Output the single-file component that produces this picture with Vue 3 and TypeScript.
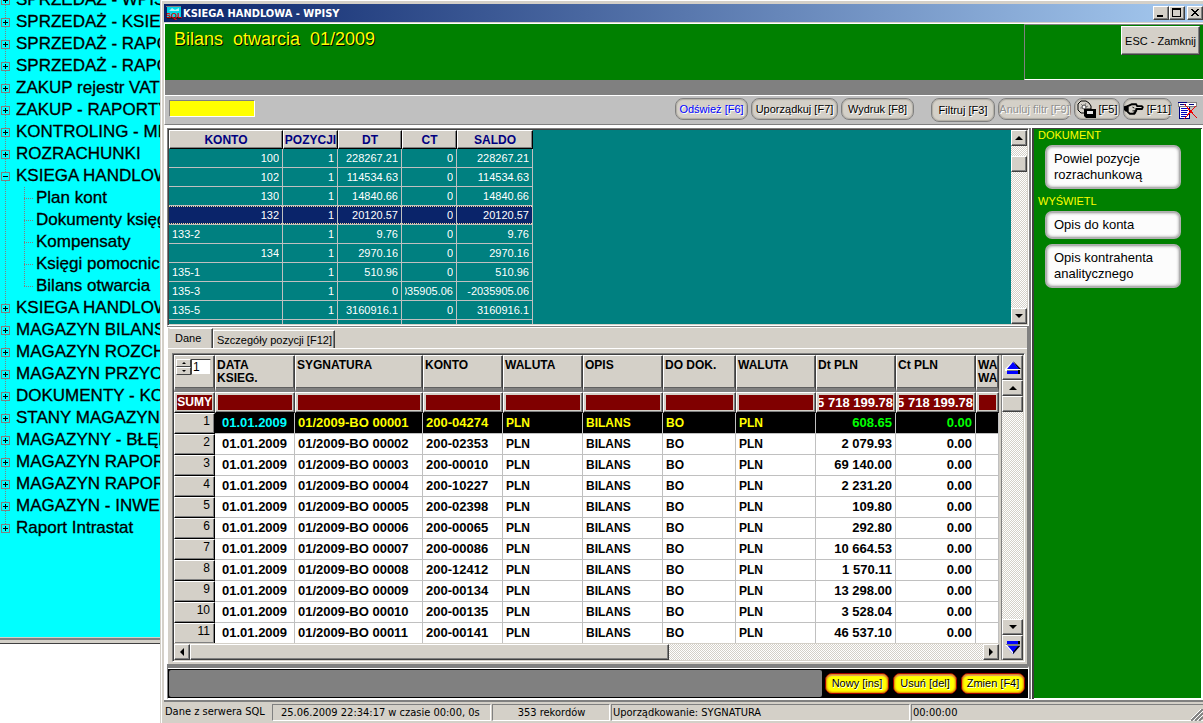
<script setup lang="ts">
import { ref } from 'vue'

interface TreeNode {
  label: string
  open?: boolean
  children?: string[]
}

interface BalanceRow {
  konto: string
  left?: boolean
  pozycji: string
  dt: string
  ct: string
  saldo: string
}

interface EntryRow {
  sygnatura: string
  konto: string
  dt: string
  ct: string
}

const tree: TreeNode[] = [
  { label: 'SPRZEDAŻ - WPISY' },
  { label: 'SPRZEDAŻ - KSIEGOWANIE' },
  { label: 'SPRZEDAŻ - RAPORTY' },
  { label: 'SPRZEDAŻ - RAPORTY' },
  { label: 'ZAKUP rejestr VAT' },
  { label: 'ZAKUP - RAPORTY' },
  { label: 'KONTROLING - MPK' },
  { label: 'ROZRACHUNKI' },
  {
    label: 'KSIEGA HANDLOWA',
    open: true,
    children: ['Plan kont', 'Dokumenty księgowe', 'Kompensaty', 'Księgi pomocnicze', 'Bilans otwarcia'],
  },
  { label: 'KSIEGA HANDLOWA' },
  { label: 'MAGAZYN BILANS' },
  { label: 'MAGAZYN ROZCHODY' },
  { label: 'MAGAZYN PRZYCHODY' },
  { label: 'DOKUMENTY - KOREKTY' },
  { label: 'STANY MAGAZYNOWE' },
  { label: 'MAGAZYNY - BŁĘDY' },
  { label: 'MAGAZYN RAPORTY' },
  { label: 'MAGAZYN RAPORTY' },
  { label: 'MAGAZYN - INWENTURA' },
  { label: 'Raport Intrastat' },
]

const balances: BalanceRow[] = [
  { konto: '100', pozycji: '1', dt: '228267.21', ct: '0', saldo: '228267.21' },
  { konto: '102', pozycji: '1', dt: '114534.63', ct: '0', saldo: '114534.63' },
  { konto: '130', pozycji: '1', dt: '14840.66', ct: '0', saldo: '14840.66' },
  { konto: '132', pozycji: '1', dt: '20120.57', ct: '0', saldo: '20120.57' },
  { konto: '133-2', left: true, pozycji: '1', dt: '9.76', ct: '0', saldo: '9.76' },
  { konto: '134', pozycji: '1', dt: '2970.16', ct: '0', saldo: '2970.16' },
  { konto: '135-1', left: true, pozycji: '1', dt: '510.96', ct: '0', saldo: '510.96' },
  { konto: '135-3', left: true, pozycji: '1', dt: '0', ct: '2035905.06', saldo: '-2035905.06' },
  { konto: '135-5', left: true, pozycji: '1', dt: '3160916.1', ct: '0', saldo: '3160916.1' },
  { konto: '', pozycji: '', dt: '', ct: '', saldo: '' },
]

const entries: EntryRow[] = [
  { sygnatura: '01/2009-BO 00001', konto: '200-04274', dt: '608.65', ct: '0.00' },
  { sygnatura: '01/2009-BO 00002', konto: '200-02353', dt: '2 079.93', ct: '0.00' },
  { sygnatura: '01/2009-BO 00003', konto: '200-00010', dt: '69 140.00', ct: '0.00' },
  { sygnatura: '01/2009-BO 00004', konto: '200-10227', dt: '2 231.20', ct: '0.00' },
  { sygnatura: '01/2009-BO 00005', konto: '200-02398', dt: '109.80', ct: '0.00' },
  { sygnatura: '01/2009-BO 00006', konto: '200-00065', dt: '292.80', ct: '0.00' },
  { sygnatura: '01/2009-BO 00007', konto: '200-00086', dt: '10 664.53', ct: '0.00' },
  { sygnatura: '01/2009-BO 00008', konto: '200-12412', dt: '1 570.11', ct: '0.00' },
  { sygnatura: '01/2009-BO 00009', konto: '200-00134', dt: '13 298.00', ct: '0.00' },
  { sygnatura: '01/2009-BO 00010', konto: '200-00135', dt: '3 528.04', ct: '0.00' },
  { sygnatura: '01/2009-BO 00011', konto: '200-00141', dt: '46 537.10', ct: '0.00' },
]

const headings = ['SYGNATURA', 'KONTO', 'WALUTA', 'OPIS', 'DO DOK.', 'WALUTA', 'Dt PLN', 'Ct PLN']
const sums = ['', '', '', '', '', '', '', '15 718 199.78', '15 718 199.78', '']
const bannerTitle = 'Bilans  otwarcia  01/2009'

const search = ref('')
const position = ref('1')
const selectedBalance = ref(3)
const selectedEntry = ref(0)
</script>

<template>
  <div class="desktop">
    <aside class="side">
      <nav class="tree" aria-label="Menu">
        <ul>
          <li v-for="(node, i) in tree" :key="i">
            <a href="#" class="node">
              <span class="box" :class="{ open: node.open }"></span>
              <span class="label">{{ node.label }}</span>
            </a>
            <ul v-if="node.children" class="branch">
              <li v-for="child in node.children" :key="child">
                <a href="#" class="leaf">{{ child }}</a>
              </li>
            </ul>
          </li>
        </ul>
      </nav>
      <div class="side-rest"></div>
    </aside>

    <main class="window">
      <header class="titlebar">
        <svg class="app-icon" width="16" height="16" viewBox="0 0 16 16" aria-hidden="true">
          <rect x="1" y="1" width="14" height="12" fill="#00d8e8" />
          <path d="M0 1h15v1H0z" fill="#808080" />
          <path d="M1 12h14v2H1z" fill="#102030" />
          <path d="M3 6l3-3 3 2 4-2v3H3z" fill="#b0f4f8" />
          <text x="8" y="13" text-anchor="middle" class="app-icon-text">SQL</text>
        </svg>
        <h1>KSIEGA HANDLOWA - WPISY</h1>
        <div class="sys">
          <button type="button" aria-label="Minimalizuj">
            <svg width="10" height="10" viewBox="0 0 10 10"><path d="M1 7h6v2H1z" /></svg>
          </button>
          <button type="button" aria-label="Maksymalizuj">
            <svg width="10" height="10" viewBox="0 0 10 10"><path d="M0 0h9v9H0zM1 2v6h7V2z" fill-rule="evenodd" /></svg>
          </button>
          <button type="button" class="close" aria-label="Zamknij">
            <svg width="10" height="10" viewBox="0 0 10 10">
              <path d="M1 1h2v1h1v1h2V2h1V1h2v1H8v1H7v1H6v1h1v1h1v1h1v1H7V7H6V6H4v1H3v1H1V7h1V6h1V5h1V4H3V3H2V2H1z" />
            </svg>
          </button>
        </div>
      </header>

      <section class="banner">
        <h2>{{ bannerTitle }}</h2>
        <div class="banner-side">
          <button type="button" class="esc">ESC - Zamknij</button>
        </div>
      </section>
      <div class="strip"></div>

      <div class="toolbar">
        <input v-model="search" class="search" type="text" aria-label="Szukaj" />
        <div class="tools">
          <button type="button" class="pill w72 blue">Odśwież [F6]</button>
          <button type="button" class="pill w87">Uporządkuj [F7]</button>
          <button type="button" class="pill w72">Wydruk [F8]</button>
          <button type="button" class="pill w64 gap tall">Filtruj [F3]</button>
          <button type="button" class="pill w72 off" disabled>Anuluj filtr [F9]</button>
          <button type="button" class="pill w46">
            <svg width="19" height="18" viewBox="0 0 19 18" aria-hidden="true">
              <path d="M4 1h5l3 2 2 3v3H8v4H4L1 10V4z" fill="#d4d0c8" stroke="#000" />
              <path d="M4 4l2 2M9 3l-1 2M3 8h2M11 6l-2 1" stroke="#808080" />
              <circle cx="7" cy="7" r="2" fill="#fff" stroke="#404040" />
              <path d="M7 9h12v9H9l-2-2z" fill="#000" />
              <path d="M10 11h6v3h-6z" fill="#e8e8e8" />
            </svg>
            [F5]
          </button>
          <button type="button" class="pill w48">
            <svg width="21" height="14" viewBox="0 0 21 14" aria-hidden="true">
              <path d="M0 4l4-1v7H2L0 8z" fill="#000" />
              <path d="M4 4l4-2h5l1 2h5l1 1-1 2h-6v2h-1v2h-1v1H6l-2-2z" fill="#d4d0c8" stroke="#000" stroke-width="2" stroke-linejoin="round" />
              <path d="M9 5l2 1M9 9h3" stroke="#000" />
            </svg>
            [F11]
          </button>
          <button type="button" class="plain" aria-label="Usuń tabelę">
            <svg width="20" height="18" viewBox="0 0 20 18" shape-rendering="crispEdges" aria-hidden="true">
              <path d="M0 0h19v5H0z" fill="#808080" />
              <path d="M1 1h17v3H1z" fill="#fff" />
              <path d="M0 0h9v1H0zM2 2h6v1H2zM11 2h5v1h-5z" fill="#000080" />
              <path d="M1 5h11v12H1z" fill="#000080" />
              <path d="M2 5h9v11H2z" fill="#fff" />
              <path d="M3 6h6v1H3zM3 8h7v1H3zM3 10h6v1H3zM3 12h7v1H3zM3 14h5v1H3z" fill="#0000c0" />
              <path d="M6 2l13 14M18 4L6 17" stroke="#f00000" fill="none" />
            </svg>
          </button>
        </div>
      </div>

      <div class="body">
        <div class="left">
          <section class="balances sunken">
            <div class="balances-view">
              <table>
                <colgroup>
                  <col class="c114" /><col class="c55" /><col class="c64" /><col class="c55" /><col class="c76" />
                </colgroup>
                <thead>
                  <tr>
                    <th>KONTO</th><th>POZYCJI</th><th>DT</th><th>CT</th><th>SALDO</th>
                  </tr>
                </thead>
                <tbody>
                  <tr v-for="(row, i) in balances" :key="i" :class="{ selected: i === selectedBalance }" @click="selectedBalance = i">
                    <td :class="{ start: row.left }"><span>{{ row.konto }}</span></td>
                    <td><span>{{ row.pozycji }}</span></td>
                    <td><span>{{ row.dt }}</span></td>
                    <td><span>{{ row.ct }}</span></td>
                    <td><span>{{ row.saldo }}</span></td>
                  </tr>
                </tbody>
              </table>
            </div>
            <div class="vscroll">
              <button type="button" class="sb" aria-label="W górę"><i class="arrow up"></i></button>
              <div class="thumb first"></div>
              <div class="fill"></div>
              <button type="button" class="sb" aria-label="W dół"><i class="arrow down"></i></button>
            </div>
          </section>

          <section class="details">
            <div class="tabs" role="tablist">
              <button type="button" role="tab" aria-selected="true" class="tab active">Dane</button>
              <button type="button" role="tab" aria-selected="false" class="tab">Szczegóły pozycji [F12]</button>
            </div>
            <div class="pane">
              <div class="grid sunken">
                <div class="grid-main">
                  <div class="grid-view">
                    <table>
                      <colgroup>
                        <col class="c41" /><col class="c80" /><col class="c128" /><col class="c80" /><col class="c80" />
                        <col class="c80" /><col class="c73" /><col class="c80" /><col class="c80" /><col class="c80" /><col />
                      </colgroup>
                      <thead>
                        <tr class="heads">
                          <th>
                            <div class="counter">
                              <span class="spin">
                                <button type="button" aria-label="Następny"><i class="arrow up small"></i></button>
                                <button type="button" aria-label="Poprzedni"><i class="arrow down small"></i></button>
                              </span>
                              <input v-model="position" type="text" aria-label="Pozycja" />
                            </div>
                          </th>
                          <th>DATA<br />KSIEG.</th>
                          <th v-for="(h, i) in headings" :key="i">{{ h }}</th>
                          <th>WA<br />WA</th>
                        </tr>
                        <tr class="sums">
                          <th><span>SUMY</span></th>
                          <td v-for="(s, i) in sums" :key="i"><span>{{ s }}</span></td>
                        </tr>
                      </thead>
                      <tbody>
                        <tr v-for="(row, i) in entries" :key="i" :class="{ selected: i === selectedEntry }" @click="selectedEntry = i">
                          <th>{{ i + 1 }}</th>
                          <td class="date">01.01.2009</td>
                          <td class="code">{{ row.sygnatura }}</td>
                          <td class="code">{{ row.konto }}</td>
                          <td>PLN</td>
                          <td>BILANS</td>
                          <td>BO</td>
                          <td>PLN</td>
                          <td class="amount">{{ row.dt }}</td>
                          <td class="amount">{{ row.ct }}</td>
                          <td></td>
                        </tr>
                      </tbody>
                    </table>
                  </div>
                  <div class="hscroll">
                    <button type="button" class="sb" aria-label="W lewo"><i class="arrow west"></i></button>
                    <div class="thumb wide"></div>
                    <div class="fill"></div>
                    <button type="button" class="sb" aria-label="W prawo"><i class="arrow east"></i></button>
                  </div>
                </div>
                <div class="vscroll big">
                  <button type="button" class="sb jump" aria-label="Początek">
                    <svg width="16" height="14" viewBox="0 0 16 14"><path d="M8 0L0 8v2h2z" fill="#fff" /><path d="M8 0l8 8h-3z" fill="#000" /><path d="M8 1l6 7H2z" fill="#00f" /><path d="M1 8h14v2H1z" fill="#fff" /><path d="M2 9h13v1H2z" fill="#808080" /><path d="M2 10h13v3H2z" fill="#00f" /><path d="M13 9h2v4h-2z" fill="#000" /></svg>
                  </button>
                  <button type="button" class="sb" aria-label="W górę"><i class="arrow up"></i></button>
                  <div class="thumb"></div>
                  <div class="fill"></div>
                  <button type="button" class="sb" aria-label="W dół"><i class="arrow down"></i></button>
                  <button type="button" class="sb jump" aria-label="Koniec">
                    <svg width="16" height="14" viewBox="0 0 16 14"><path d="M2 0h12v3H2z" fill="#00f" /><path d="M13 0h2v4h-2z" fill="#000" /><path d="M1 3h14v2H1z" fill="#808080" /><path d="M1 5h14l-7 8z" fill="#00f" /><path d="M13 5h2l-7 8v-2z" fill="#000" /><path d="M0 4h2l6 7v2z" fill="#fff" /></svg>
                  </button>
                </div>
              </div>
            </div>
          </section>

          <footer class="actions">
            <div class="message"></div>
            <button type="button">Nowy [ins]</button>
            <button type="button">Usuń [del]</button>
            <button type="button">Zmien [F4]</button>
          </footer>
        </div>

        <aside class="commands">
          <h3>DOKUMENT</h3>
          <button type="button">Powiel pozycje rozrachunkową</button>
          <h3>WYŚWIETL</h3>
          <button type="button">Opis do konta</button>
          <button type="button">Opis kontrahenta analitycznego</button>
        </aside>
      </div>

      <footer class="status">
        <span class="source">Dane z serwera SQL</span>
        <span class="field time">25.06.2009 22:34:17 w czasie 00:00, 0s</span>
        <span class="field count">353 rekordów</span>
        <span class="field order">Uporządkowanie: SYGNATURA</span>
        <span class="field clock">00:00:00</span>
        <svg class="grip" width="12" height="12" viewBox="0 0 12 12" aria-hidden="true">
          <path d="M0 12L12 0M4 12l8-8M8 12l4-4" stroke="#808080" stroke-width="2" />
          <path d="M-1 11L11-1M3 11l9-9M7 11l5-5" stroke="#fff" />
        </svg>
      </footer>
    </main>
  </div>
</template>

<style>
html,
body {
  background: #fff;
  overflow: hidden;
}
</style>

<style scoped>
* {
  box-sizing: border-box;
}

.desktop {
  display: flex;
  height: 100vh;
  font-family: "Liberation Sans", Arial, sans-serif;
  font-size: 11px;
  color: #000;
}

button,
input {
  font: inherit;
  color: inherit;
  margin: 0;
  padding: 0;
  border-radius: 0;
  outline: none;
}

h1,
h2,
h3,
ul {
  margin: 0;
  padding: 0;
}

ul {
  list-style: none;
}

/* navigation tree */
.side {
  flex: none;
  width: 160px;
  display: flex;
  flex-direction: column;
}

.tree {
  flex: 1;
  min-height: 0;
  overflow: hidden;
  background: #0ff;
  border-bottom: 1px solid #d4d0c8;
}

.tree > ul {
  margin-top: -11px;
}

.tree > ul > li {
  background: repeating-linear-gradient(#808080 0 1px, transparent 1px 2px) 5px 0 / 1px 100% no-repeat;
}

.tree > ul > li:last-child {
  background-size: 1px 11px;
}

.node,
.leaf {
  display: flex;
  align-items: center;
  height: 22px;
  font-size: 17px;
  white-space: nowrap;
  color: #000;
  text-decoration: none;
  -webkit-text-stroke: 0.3px #000;
}

.node {
  padding-left: 1px;
  gap: 6px;
}

.box {
  flex: none;
  width: 9px;
  height: 9px;
  border: 1px solid #808080;
  background:
    linear-gradient(#000, #000) center / 5px 1px no-repeat,
    linear-gradient(#000, #000) center / 1px 5px no-repeat,
    #0ff;
}

.box.open {
  background: linear-gradient(#000, #000) center / 5px 1px no-repeat, #0ff;
}

.branch {
  margin-left: 24px;
}

.branch li {
  padding-left: 12px;
  background:
    repeating-linear-gradient(#808080 0 1px, transparent 1px 2px) 0 0 / 1px 100% no-repeat,
    repeating-linear-gradient(90deg, #808080 0 1px, transparent 1px 2px) 0 11px / 9px 1px no-repeat;
}

.branch li:last-child {
  background-size: 1px 12px, 9px 1px;
}

.side-rest {
  flex: none;
  height: 85px;
  background: #fff;
  border-top: 2px solid #808080;
  box-shadow: inset 0 3px #d4d0c8, inset 0 4px #404040;
}

/* window frame */
.window {
  flex: 1;
  min-width: 0;
  display: flex;
  flex-direction: column;
  padding: 2px 0 0 2px;
  background: #d4d0c8;
  border-left: 1px solid #d4d0c8;
  box-shadow: inset 1px 1px #fff;
}

.titlebar {
  display: flex;
  align-items: center;
  height: 18px;
  margin: 2px 0 1px 1px;
  padding-left: 2px;
  background: linear-gradient(90deg, #0a246a, #a6caf0);
  color: #fff;
}

.titlebar h1 {
  flex: 1;
  padding-left: 1px;
  font-family: "DejaVu Sans Condensed", "DejaVu Sans", sans-serif;
  font-size: 11px;
  font-weight: bold;
  white-space: nowrap;
}

.app-icon-text {
  font: bold 8px "Liberation Sans", Arial, sans-serif;
  fill: #e00000;
}

.sys {
  display: flex;
}

.sys button {
  width: 16px;
  height: 14px;
  display: flex;
  align-items: center;
  justify-content: center;
  background: #d4d0c8;
  border: 1px solid;
  border-color: #fff #404040 #404040 #fff;
  box-shadow: inset -1px -1px #808080;
}

.sys .close {
  margin-left: 2px;
}

.banner {
  display: flex;
  height: 57px;
  margin-left: 1px;
  background: #008000;
  border-top: 1px solid #fff;
  border-left: 1px solid #fff;
}

.banner h2 {
  flex: 1;
  padding: 4px 0 0 9px;
  font-size: 18px;
  line-height: 22px;
  font-weight: normal;
  white-space: pre;
  color: #ff0;
  text-shadow: 1px 1px #000;
}

.banner-side {
  width: 179px;
  display: flex;
  justify-content: flex-end;
  align-items: flex-start;
  padding: 1px 3px 0 0;
  border: 1px solid;
  border-color: #808080 transparent #fff #808080;
  border-right: 0;
}

.esc {
  width: 79px;
  height: 29px;
  background: #d4d0c8;
  border: 1px solid;
  border-color: #fff #404040 #404040 #fff;
  box-shadow: inset -1px -1px #808080;
  white-space: nowrap;
}

.strip {
  height: 15px;
  margin-left: 1px;
  background: #808080;
  border-left: 1px solid #fff;
}

.toolbar {
  display: flex;
  justify-content: space-between;
  height: 30px;
  margin-left: 1px;
  padding: 2px 5px 0 4px;
  background: #c0c0c0;
  border-top: 1px solid #fff;
  border-left: 1px solid #fff;
  border-bottom: 1px solid #808080;
}

.search {
  width: 86px;
  height: 17px;
  margin-top: 2px;
  background: #ff0;
  border: 1px solid;
  border-color: #808080 #fff #fff #808080;
}

.tools {
  display: flex;
  align-items: flex-start;
  gap: 3px;
}

.pill {
  height: 22px;
  display: flex;
  align-items: center;
  justify-content: center;
  gap: 3px;
  background: #d4d0c8;
  border: 1px solid #808080;
  border-radius: 8px;
  box-shadow: inset 0 0 1px 1px #b0aca4;
  text-shadow: 1px 1px #fff;
  white-space: nowrap;
}

.pill.tall {
  height: 24px;
}

.gap {
  margin-left: 14px;
}

.w46 { width: 46px; }
.w48 { width: 49px; }
.w64 { width: 64px; }
.w72 { width: 73px; }
.w87 { width: 87px; }

.blue { color: #00f; }
.off { color: #909090; }

.plain {
  margin: 4px 0 0 3px;
  background: none;
  border: 0;
  line-height: 0;
}

/* work area */
.body {
  flex: 1;
  min-height: 0;
  display: flex;
  margin-left: 1px;
  padding: 3px 0 1px 3px;
  background: #fff;
}

.left {
  flex: 1;
  min-width: 0;
  display: flex;
  flex-direction: column;
}

.sunken {
  display: flex;
  padding: 1px;
  background: #d4d0c8;
  border: 1px solid;
  border-color: #808080 #fff #fff #808080;
  box-shadow: inset 1px 1px #404040;
}

.balances {
  flex: none;
  height: 198px;
}

.balances-view {
  flex: 1;
  min-width: 0;
  overflow: hidden;
  background: #008080;
}

table {
  table-layout: fixed;
  border-collapse: separate;
  border-spacing: 0;
}

.balances table {
  width: 364px;
}

.c41 { width: 41px; }
.c55 { width: 55px; }
.c64 { width: 64px; }
.c73 { width: 73px; }
.c76 { width: 76px; }
.c80 { width: 80px; }
.c114 { width: 114px; }
.c128 { width: 128px; }

.balances th {
  height: 19px;
  padding: 0;
  overflow: hidden;
  font-size: 12px;
  line-height: 16px;
  color: #000080;
  background: #d4d0c8;
  border: 1px solid;
  border-color: #fff #000 #000 #fff;
  box-shadow: inset -1px -1px #808080;
}

.balances td {
  height: 19px;
  padding: 0 3px;
  font-size: 11px;
  line-height: 18px;
  color: #fff;
  border-right: 1px solid #c0c0c0;
  border-bottom: 1px solid #c0c0c0;
}

.balances td span {
  display: flex;
  height: 18px;
  overflow: hidden;
  justify-content: flex-end;
}

.balances td.start span {
  justify-content: flex-start;
}

.balances .selected td {
  background:
    repeating-linear-gradient(90deg, #f5db95 0 1px, transparent 1px 2px) 0 0 / 100% 1px no-repeat,
    repeating-linear-gradient(90deg, #f5db95 0 1px, transparent 1px 2px) 0 100% / 100% 1px no-repeat,
    #0a246a;
}

/* scroll bars */
.vscroll,
.hscroll {
  flex: none;
  display: flex;
  background: repeating-conic-gradient(#fff 0 25%, #d4d0c8 0 50%) 0 0 / 2px 2px;
}

.vscroll {
  width: 16px;
  flex-direction: column;
}

.vscroll.big {
  width: 22px;
  margin-left: 2px;
  border-left: 1px solid #808080;
}

.sb,
.thumb {
  flex: none;
  width: 16px;
  height: 16px;
  display: flex;
  align-items: center;
  justify-content: center;
  background: #d4d0c8;
  border: 1px solid;
  border-color: #fff #404040 #404040 #fff;
  box-shadow: inset -1px -1px #808080;
}

.big .sb,
.big .thumb {
  width: 100%;
}

.sb.jump {
  height: 25px;
}

.thumb.first {
  margin-top: 10px;
}

.thumb.wide {
  width: 58%;
}

.fill {
  flex: 1;
}

.arrow {
  width: 0;
  height: 0;
  border: 4px solid transparent;
}

.arrow.up { border-top: 0; border-bottom-color: #000; }
.arrow.down { border-bottom: 0; border-top-color: #000; }
.arrow.west { border-left: 0; border-right-color: #000; }
.arrow.east { border-right: 0; border-left-color: #000; }
.arrow.small { border-width: 2px; }
.arrow.up.small { border-top: 0; }
.arrow.down.small { border-bottom: 0; }

/* details tabs */
.details {
  flex: 1;
  min-height: 0;
  display: flex;
  flex-direction: column;
  background: #d4d0c8;
  border-top: 1px solid #808080;
  border-right: 2px solid #808080;
  border-bottom: 2px solid #808080;
  box-shadow: inset 1px 1px #fff;
}

.tabs {
  flex: none;
  display: flex;
  align-items: flex-end;
  height: 21px;
  padding-left: 1px;
  border-left: 1px solid #fff;
}

.tab {
  height: 18px;
  padding: 1px 4px 0 3px;
  text-align: left;
  background: #d4d0c8;
  border: 1px solid;
  border-color: #fff #404040 transparent #fff;
  border-bottom: 0;
  box-shadow: inset -1px 0 #808080;
  white-space: nowrap;
}

.tab.active {
  width: 44px;
  height: 20px;
  padding: 0 8px 2px 5px;
  border-left-color: transparent;
}

.tab:last-child {
  width: 122px;
}

.pane {
  flex: 1;
  min-height: 0;
  display: flex;
  padding: 4px 2px 2px 4px;
  border-left: 1px solid #fff;
  border-top: 1px solid #fff;
}

.grid {
  flex: 1;
  min-width: 0;
}

.grid-main {
  flex: 1;
  min-width: 0;
  display: flex;
  flex-direction: column;
}

.grid-view {
  flex: 1;
  min-height: 0;
  overflow: hidden;
  background: #fff;
  border-bottom: 1px solid #d4d0c8;
}

.grid table {
  width: 100%;
  font-size: 12px;
  font-weight: bold;
}

.grid th,
.grid td {
  padding: 0;
  overflow: hidden;
  white-space: nowrap;
}

.grid .heads th {
  height: 37px;
  padding: 3px 1px 0;
  vertical-align: top;
  text-align: left;
  font-size: 12px;
  line-height: 13px;
  background: #d4d0c8;
  border-left: 1px solid #fff;
  border-top: 1px solid #fff;
  border-right: 1px solid #404040;
  border-bottom: 4px solid #808080;
  box-shadow: inset -1px -1px #606060;
}

.counter {
  display: flex;
  font-weight: normal;
}

.spin {
  width: 15px;
  display: flex;
  flex-direction: column;
}

.spin button {
  width: 15px;
  height: 8px;
  display: flex;
  align-items: center;
  justify-content: center;
  background: #d4d0c8;
  border: 1px solid;
  border-color: #fff #404040 #404040 #fff;
}

.counter input {
  width: 20px;
  height: 16px;
  padding-left: 1px;
  background: #fff;
  border: 1px solid;
  border-color: #404040 #d4d0c8 #d4d0c8 #404040;
}

.grid .sums th,
.grid .sums td {
  height: 21px;
  padding: 2px;
  background: #d4d0c8;
  border: 1px solid;
  border-color: #fff #404040 #000 #fff;
  box-shadow: inset -1px -1px #808080;
}

.sums span {
  display: flex;
  justify-content: flex-end;
  height: 15px;
  overflow: hidden;
  font-size: 13px;
  line-height: 15px;
  color: #fff;
  background: #800000;
}

.grid .sums th span {
  font-size: 12px;
}

.grid tbody th {
  height: 21px;
  padding-right: 4px;
  vertical-align: top;
  text-align: right;
  font-size: 12px;
  line-height: 15px;
  font-weight: normal;
  background: #d4d0c8;
  border: 1px solid;
  border-color: #fff #000 #000 #fff;
  box-shadow: inset -1px -1px #808080;
}

.grid tbody td {
  height: 21px;
  padding: 0 3px;
  line-height: 20px;
  border-right: 1px solid #c0c0c0;
  border-bottom: 1px solid #c0c0c0;
}

.grid tbody .date {
  padding: 0 7px;
  text-align: right;
  font-size: 13px;
}

.grid tbody .code {
  font-size: 13px;
}

.grid tbody .amount {
  text-align: right;
  font-size: 13px;
}

.grid tbody .selected td {
  color: #ff0;
  background: #000;
}

.grid tbody .selected .date { color: #0ff; }
.grid tbody .selected .amount { color: #0f0; }

/* action bar */
.actions {
  flex: none;
  display: flex;
  align-items: center;
  gap: 4px;
  height: 33px;
  padding: 1px 3px 1px 1px;
  background: #000;
  border: 1px solid #808080;
  border-top: 2px solid #808080;
  border-right-color: #fff;
  border-bottom-color: #fff;
  box-shadow: inset 0 1px #fff;
}

.message {
  flex: 1;
  align-self: stretch;
  margin: 1px -1px 0 0;
  background: #808080;
  border-radius: 2px;
}

.actions button {
  width: 64px;
  height: 21px;
  background: #ff0;
  border: 1px solid #a00000;
  border-radius: 7px;
  box-shadow: inset 0 0 2px 1px #e08000, inset 0 2px #e0b080;
  text-shadow: 1px 1px #fff;
  white-space: nowrap;
}

/* command panel */
.commands {
  flex: none;
  width: 174px;
  padding: 0 22px 0 4px;
  background: #008000;
  border-left: 2px solid #808080;
  border-right: 1px solid #fff;
  box-shadow: inset 1px 0 #fff, inset 3px 1px #404040, inset -1px -1px #fff;
}

.commands h3 {
  padding-left: 3px;
  font-size: 11px;
  line-height: 14px;
  font-weight: normal;
  color: #ff0;
}

.commands button {
  display: block;
  width: 136px;
  margin: 3px 0 5px 10px;
  padding: 4px 12px 4px 7px;
  font-size: 13px;
  line-height: 16px;
  text-align: left;
  background: #fcfcfc;
  border: 2px solid #b0b0b0;
  border-radius: 7px;
  box-shadow: inset 0 0 3px #909090;
}

/* status bar */
.status {
  flex: none;
  display: flex;
  align-items: flex-start;
  height: 23px;
  margin-left: 1px;
  border-top: 2px solid #808080;
  padding: 2px 0 0 1px;
  font-family: "DejaVu Sans Condensed", "DejaVu Sans", sans-serif;
  font-size: 11px;
  line-height: 16px;
  white-space: nowrap;
  position: relative;
}

.source {
  width: 107px;
}

.field {
  height: 17px;
  margin-right: 1px;
  padding-left: 1px;
  border: 1px solid;
  border-color: #808080 #fff #fff #808080;
}

.time { width: 219px; padding-left: 8px; }
.count { width: 118px; text-align: center; }
.order { width: 299px; }
.clock { flex: 1; margin-right: 0; border-right: 0; }

.grip {
  position: absolute;
  right: 0;
  bottom: 2px;
}
</style>
